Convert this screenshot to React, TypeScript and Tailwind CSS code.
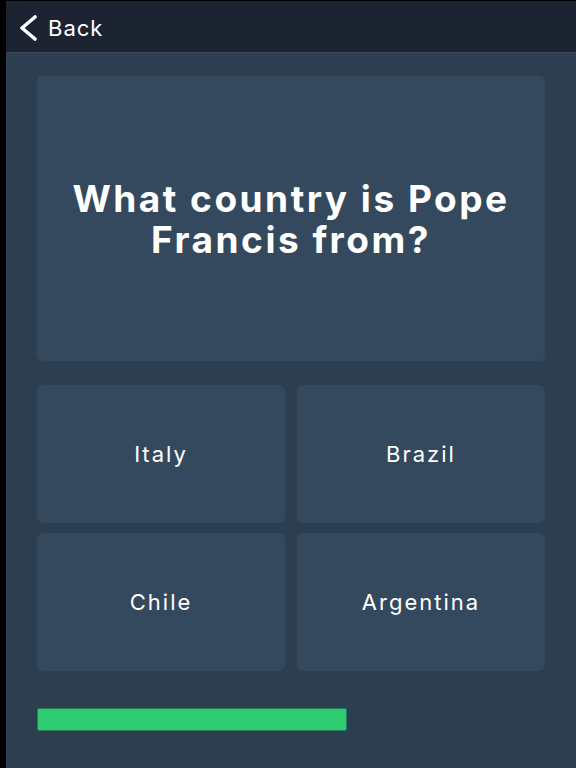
import React from "react";

const answers = ["Italy", "Brazil", "Chile", "Argentina"];

const App = () => {
  const progress = 61;
  return (
    <div
      className="flex h-[768px] w-full bg-black"
      style={{ fontFamily: "Inter, 'Open Sans', sans-serif" }}
    >
      <div className="w-[6px] shrink-0 bg-black" />
      <div className="flex flex-1 flex-col pt-[1px]">
        <header className="flex h-[52px] items-center gap-[8px] border-b border-[#3a4a5c] bg-[#1c2331] pl-[11px] pt-[3px]">
          <svg width="23" height="26" viewBox="0 0 23 26" fill="none">
            <path
              d="M18 2 L5 13 L18 24"
              stroke="white"
              strokeWidth="3.6"
              strokeLinecap="round"
              strokeLinejoin="round"
            />
          </svg>
          <span className="text-[22px] font-normal tracking-[1px] text-white">Back</span>
        </header>
        <main className="flex flex-1 flex-col bg-[#2d3e50] px-[31px] pt-[23px]">
          <div className="flex h-[285px] items-center justify-center rounded-[6px] bg-[#34495e] px-[16px]">
            <h1 className="text-center text-[37px] font-bold leading-[41px] tracking-[2.5px] text-white">
              What country is Pope Francis from?
            </h1>
          </div>
          <div className="mt-[24px] grid grid-cols-2 gap-x-[12px] gap-y-[10px]">
            {answers.map((a) => (
              <button
                key={a}
                className="flex h-[138px] items-center justify-center rounded-[6px] bg-[#34495e] text-[22px] tracking-[2px] text-white"
              >
                {a}
              </button>
            ))}
          </div>
          <div className="mt-[37px] h-[23px] w-full">
            <div
              className="h-full rounded-[2px] border border-[#25805a] bg-[#2ecc71]"
              style={{ width: `${progress}%` }}
            />
          </div>
        </main>
      </div>
    </div>
  );
};

export default App;
